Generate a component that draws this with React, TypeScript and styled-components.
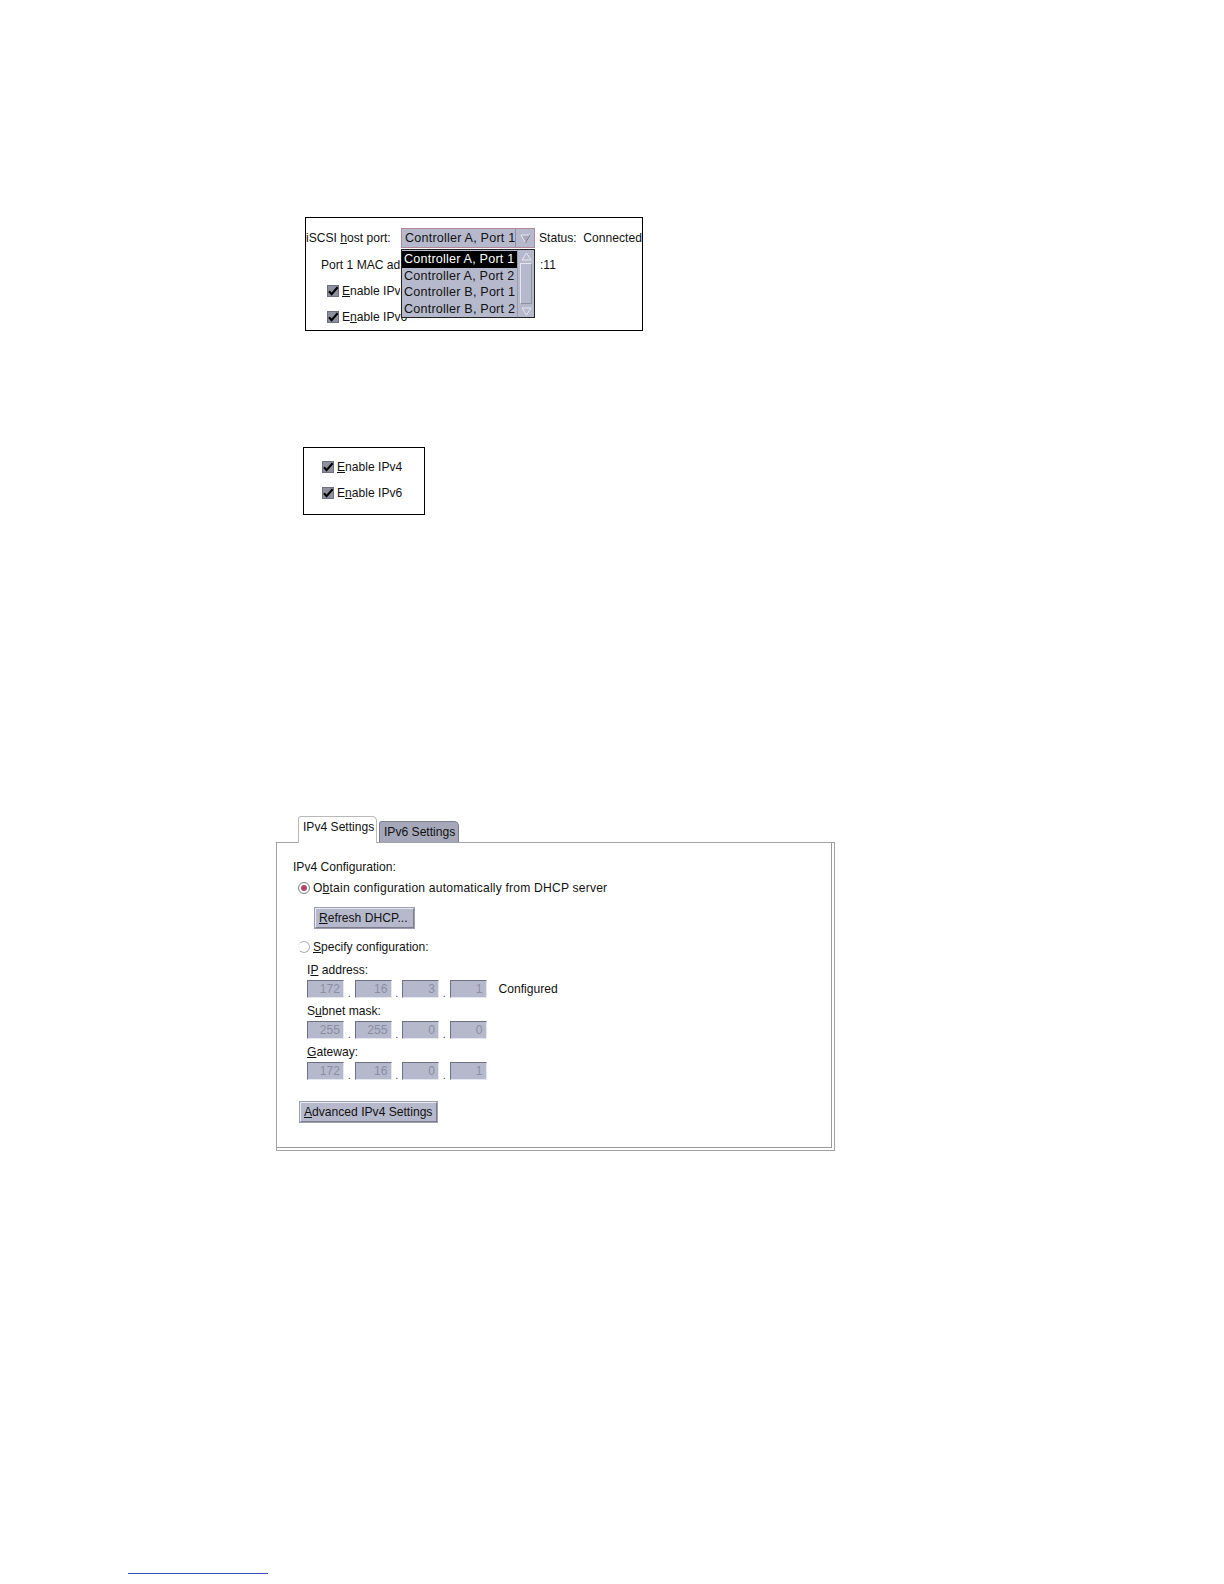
import React from 'react';
import styled, { createGlobalStyle } from 'styled-components';

const GlobalStyle = createGlobalStyle`
    html, body {
        margin: 0;
        padding: 0;
        background: #fff;
        overflow: hidden;
    }
    body {
        font-family: "Liberation Sans", Arial, sans-serif;
        font-size: 12.1px;
        color: #111;
    }
`;

const Page = styled.div`
    width: 100%;
    height: 1584px;
    overflow: hidden;
    display: flex;
    flex-direction: column;
    padding-top: 217px;
    box-sizing: border-box;
`;

const Figure = styled.div<{ $left: number; $top?: number; $width: number; $height: number }>`
    margin-left: ${p => p.$left}px;
    margin-top: ${p => p.$top ?? 0}px;
    width: ${p => p.$width}px;
    height: ${p => p.$height}px;
    flex-shrink: 0;
    border: 1px solid #000;
    box-sizing: border-box;
    position: relative;
    display: flex;
    flex-direction: column;
`;

const Row = styled.div<{ $top?: number; $indent?: number }>`
    display: flex;
    align-items: center;
    height: 20px;
    margin-top: ${p => p.$top ?? 0}px;
    padding-left: ${p => p.$indent ?? 0}px;
    white-space: nowrap;
`;

const Label = styled.span<{ $width?: number; $gap?: number }>`
    width: ${p => (p.$width ? `${p.$width}px` : 'auto')};
    margin-left: ${p => p.$gap ?? 0}px;
    flex-shrink: 0;
`;

const Clip = styled.span<{ $width: number }>`
    width: ${p => p.$width}px;
    overflow: hidden;
    flex-shrink: 0;
`;

const Combo = styled.div`
    width: 134px;
    height: 20px;
    box-sizing: border-box;
    border: 1px solid #b4869c;
    background: #b6b9cc;
    display: flex;
    align-items: center;
    padding-left: 3px;
    margin-right: 4px;
    font-size: 12.6px;
    letter-spacing: 0.2px;
`;

const ComboText = styled.span`
    flex: 1;
`;

const ArrowButton = styled.div`
    width: 18px;
    height: 18px;
    border-left: 1px solid #8e90a4;
    display: flex;
    align-items: center;
    justify-content: center;
`;

const DropList = styled.div`
    position: absolute;
    left: 95px;
    top: 31px;
    width: 134px;
    height: 69px;
    box-sizing: border-box;
    border: 1px solid #222;
    background: #b6b9cc;
    display: flex;
    z-index: 2;
`;

const Items = styled.div`
    flex: 1;
    display: flex;
    flex-direction: column;
    padding-top: 1px;
`;

const Item = styled.div<{ $selected?: boolean }>`
    height: 16.6px;
    line-height: 16.6px;
    padding-left: 2px;
    font-size: 12.6px;
    letter-spacing: 0.2px;
    background: ${p => (p.$selected ? '#000' : 'transparent')};
    color: ${p => (p.$selected ? '#fff' : '#111')};
    white-space: nowrap;
`;

const ScrollBar = styled.div`
    width: 16px;
    display: flex;
    flex-direction: column;
    border-left: 1px solid #9a9cae;
    background: #b6b9cc;
`;

const ScrollThumb = styled.div`
    flex: 1;
    margin: 1px 2px;
    border: 1px solid #8e90a4;
    border-top-color: #e4e6f0;
    border-left-color: #e4e6f0;
`;

const ScrollArrow = styled.div`
    height: 12px;
    display: flex;
    align-items: center;
    justify-content: center;
`;

const CheckText = styled.span`
    margin-left: 3px;
    display: inline-flex;
`;

const Tabs = styled.div`
    margin-left: 276px;
    margin-top: 301px;
    display: flex;
    flex-direction: column;
    width: 559px;
    flex-shrink: 0;
`;

const TabRow = styled.div`
    display: flex;
    align-items: flex-end;
    padding-left: 22px;
    gap: 2px;
    height: 26px;
`;

const Tab = styled.div<{ $active?: boolean }>`
    height: ${p => (p.$active ? 27 : 21)}px;
    width: ${p => (p.$active ? 79 : 80)}px;
    box-sizing: border-box;
    margin-bottom: ${p => (p.$active ? -1 : 0)}px;
    border: 1px solid ${p => (p.$active ? '#b8b8b8' : '#7c7e90')};
    border-bottom: none;
    border-radius: 3px 5px 0 0;
    background: ${p => (p.$active ? '#fff' : '#a6a8ba')};
    padding: 3px 0 0 4px;
    position: relative;
    z-index: 1;
    white-space: nowrap;
`;

const Panel = styled.div`
    height: 309px;
    box-sizing: border-box;
    border: 1px solid #a2a2a2;
    box-shadow: inset -2px -2px 0 #fff, inset -3px -3px 0 #9a9a9a;
    padding: 16px 0 0 16px;
    display: flex;
    flex-direction: column;
`;

const Line = styled.div<{ $top?: number; $indent?: number }>`
    height: 16px;
    line-height: 16px;
    margin-top: ${p => p.$top ?? 0}px;
    margin-left: ${p => p.$indent ?? 0}px;
    display: flex;
    align-items: center;
    white-space: nowrap;
`;

const Wide = styled.span`
    letter-spacing: 0.2px;
`;

const Button = styled.div<{ $top: number; $indent: number; $width: number }>`
    margin-top: ${p => p.$top}px;
    margin-left: ${p => p.$indent}px;
    width: ${p => p.$width}px;
    height: 20px;
    box-sizing: border-box;
    background: #b6b9cc;
    border: 1px solid #7c7e90;
    border-top-color: #e8e9f2;
    border-left-color: #e8e9f2;
    box-shadow: 0 0 0 1px #9c9eb0;
    display: flex;
    align-items: center;
    padding-left: 3px;
    white-space: nowrap;
`;

const Radio = styled.span<{ $checked?: boolean }>`
    width: 12px;
    height: 12px;
    border-radius: 50%;
    box-sizing: border-box;
    border: 1px solid ${p => (p.$checked ? '#7a7a7a' : '#b0b0b0')};
    border-left-color: ${p => (p.$checked ? '#7a7a7a' : '#f0f0f0')};
    background: #fff;
    display: inline-flex;
    align-items: center;
    justify-content: center;
    margin-left: 5px;
    margin-right: 3px;
    &::after {
        content: '';
        display: ${p => (p.$checked ? 'block' : 'none')};
        width: 6px;
        height: 6px;
        border-radius: 50%;
        background: #b0466e;
    }
`;

const FieldRow = styled.div<{ $top: number }>`
    display: flex;
    align-items: center;
    margin-top: ${p => p.$top}px;
    margin-left: 14px;
    height: 18px;
`;

const Field = styled.div`
    width: 37px;
    height: 18px;
    box-sizing: border-box;
    background: #b6b9cc;
    border: 1px solid #e4e6f0;
    border-top-color: #6e7082;
    border-left-color: #6e7082;
    color: #8a8ea4;
    text-align: right;
    padding-right: 3px;
    line-height: 16px;
`;

const Dot = styled.span`
    width: 10.5px;
    text-align: center;
    align-self: flex-end;
    line-height: 10px;
    color: #444;
    font-size: 11px;
`;

const Note = styled.span`
    margin-left: 12px;
`;

const FootRule = styled.div`
    margin-left: 128px;
    margin-top: auto;
    margin-bottom: 10px;
    width: 140px;
    height: 1px;
    flex-shrink: 0;
    background: #3a4cc0;
`;

const U = styled.span`
    text-decoration: underline;
    text-underline-offset: 1px;
`;

const Check = () => (
    <svg width="12" height="12" viewBox="0 0 12 12">
        <rect x="0.5" y="0.5" width="11" height="11" fill="#8e909e" stroke="#6e7080" />
        <path d="M2 6.2 L4.6 9.2 L10.6 2.2" fill="none" stroke="#000" strokeWidth="2.1" />
    </svg>
);

const DownArrow = () => (
    <svg width="11" height="11" viewBox="0 0 11 11">
        <path d="M1 2 L10 2 L5.5 10 Z" fill="#a6a8ba" stroke="#e8e9f2" strokeWidth="1" />
        <path d="M10 2 L5.5 10" stroke="#70728a" strokeWidth="1" />
    </svg>
);

const ScrollTri = ({ up }: { up?: boolean }) => (
    <svg width="11" height="9" viewBox="0 0 11 9">
        <path d={up ? 'M1 8 L10 8 L5.5 1 Z' : 'M1 1 L10 1 L5.5 8 Z'} fill="#b6b9cc" stroke="#e6e7f0" strokeWidth="1" />
    </svg>
);

const IpFields = ({ values, top, note }: { values: string[]; top: number; note?: string }) => (
    <FieldRow $top={top}>
        {values.map((v, i) => (
            <React.Fragment key={i}>
                {i > 0 && <Dot>.</Dot>}
                <Field>{v}</Field>
            </React.Fragment>
        ))}
        {note && <Note>{note}</Note>}
    </FieldRow>
);

const ports = ['Controller A, Port 1', 'Controller A, Port 2', 'Controller B, Port 1', 'Controller B, Port 2'];

const App = () => (
    <Page>
        <GlobalStyle />

        <Figure $left={305} $width={338} $height={114}>
            <Row $top={10}>
                <Label $width={95}>iSCSI <U>h</U>ost port:</Label>
                <Combo>
                    <ComboText>Controller A, Port 1</ComboText>
                    <ArrowButton><DownArrow /></ArrowButton>
                </Combo>
                <Label>Status:&nbsp; Connected</Label>
            </Row>
            <Row $top={7} $indent={15}>
                <Clip $width={79}>Port 1 MAC address:</Clip>
                <Label $gap={140}>:11</Label>
            </Row>
            <Row $top={6} $indent={21}>
                <Check />
                <CheckText><Clip $width={58}><U>E</U>nable IPv4</Clip></CheckText>
            </Row>
            <Row $top={6} $indent={21}>
                <Check />
                <CheckText>E<U>n</U>able IPv6</CheckText>
            </Row>
            <DropList>
                <Items>
                    {ports.map((p, i) => (
                        <Item key={p} $selected={i === 0}>{p}</Item>
                    ))}
                </Items>
                <ScrollBar>
                    <ScrollArrow><ScrollTri up /></ScrollArrow>
                    <ScrollThumb />
                    <ScrollArrow><ScrollTri /></ScrollArrow>
                </ScrollBar>
            </DropList>
        </Figure>

        <Figure $left={303} $top={116} $width={122} $height={68}>
            <Row $top={9} $indent={18}>
                <Check />
                <CheckText><U>E</U>nable IPv4</CheckText>
            </Row>
            <Row $top={6} $indent={18}>
                <Check />
                <CheckText>E<U>n</U>able IPv6</CheckText>
            </Row>
        </Figure>

        <Tabs>
            <TabRow>
                <Tab $active>IPv4 Settings</Tab>
                <Tab>IPv6 Settings</Tab>
            </TabRow>
            <Panel>
                <Line>IPv4 Configuration:</Line>
                <Line $top={5}>
                    <Radio $checked />
                    <Wide>O<U>b</U>tain configuration automatically from DHCP server</Wide>
                </Line>
                <Button $top={12} $indent={22} $width={99}><U>R</U>efresh DHCP...</Button>
                <Line $top={11}>
                    <Radio />
                    <span><U>S</U>pecify configuration:</span>
                </Line>
                <Line $top={7} $indent={14}>I<U>P</U>&nbsp;address:</Line>
                <IpFields top={2} values={['172', '16', '3', '1']} note="Configured" />
                <Line $top={5} $indent={14}>S<U>u</U>bnet mask:</Line>
                <IpFields top={2} values={['255', '255', '0', '0']} />
                <Line $top={5} $indent={14}><U>G</U>ateway:</Line>
                <IpFields top={2} values={['172', '16', '0', '1']} />
                <Button $top={22} $indent={7} $width={137}><U>A</U>dvanced IPv4 Settings</Button>
            </Panel>
        </Tabs>

        <FootRule />
    </Page>
);

export default App;
